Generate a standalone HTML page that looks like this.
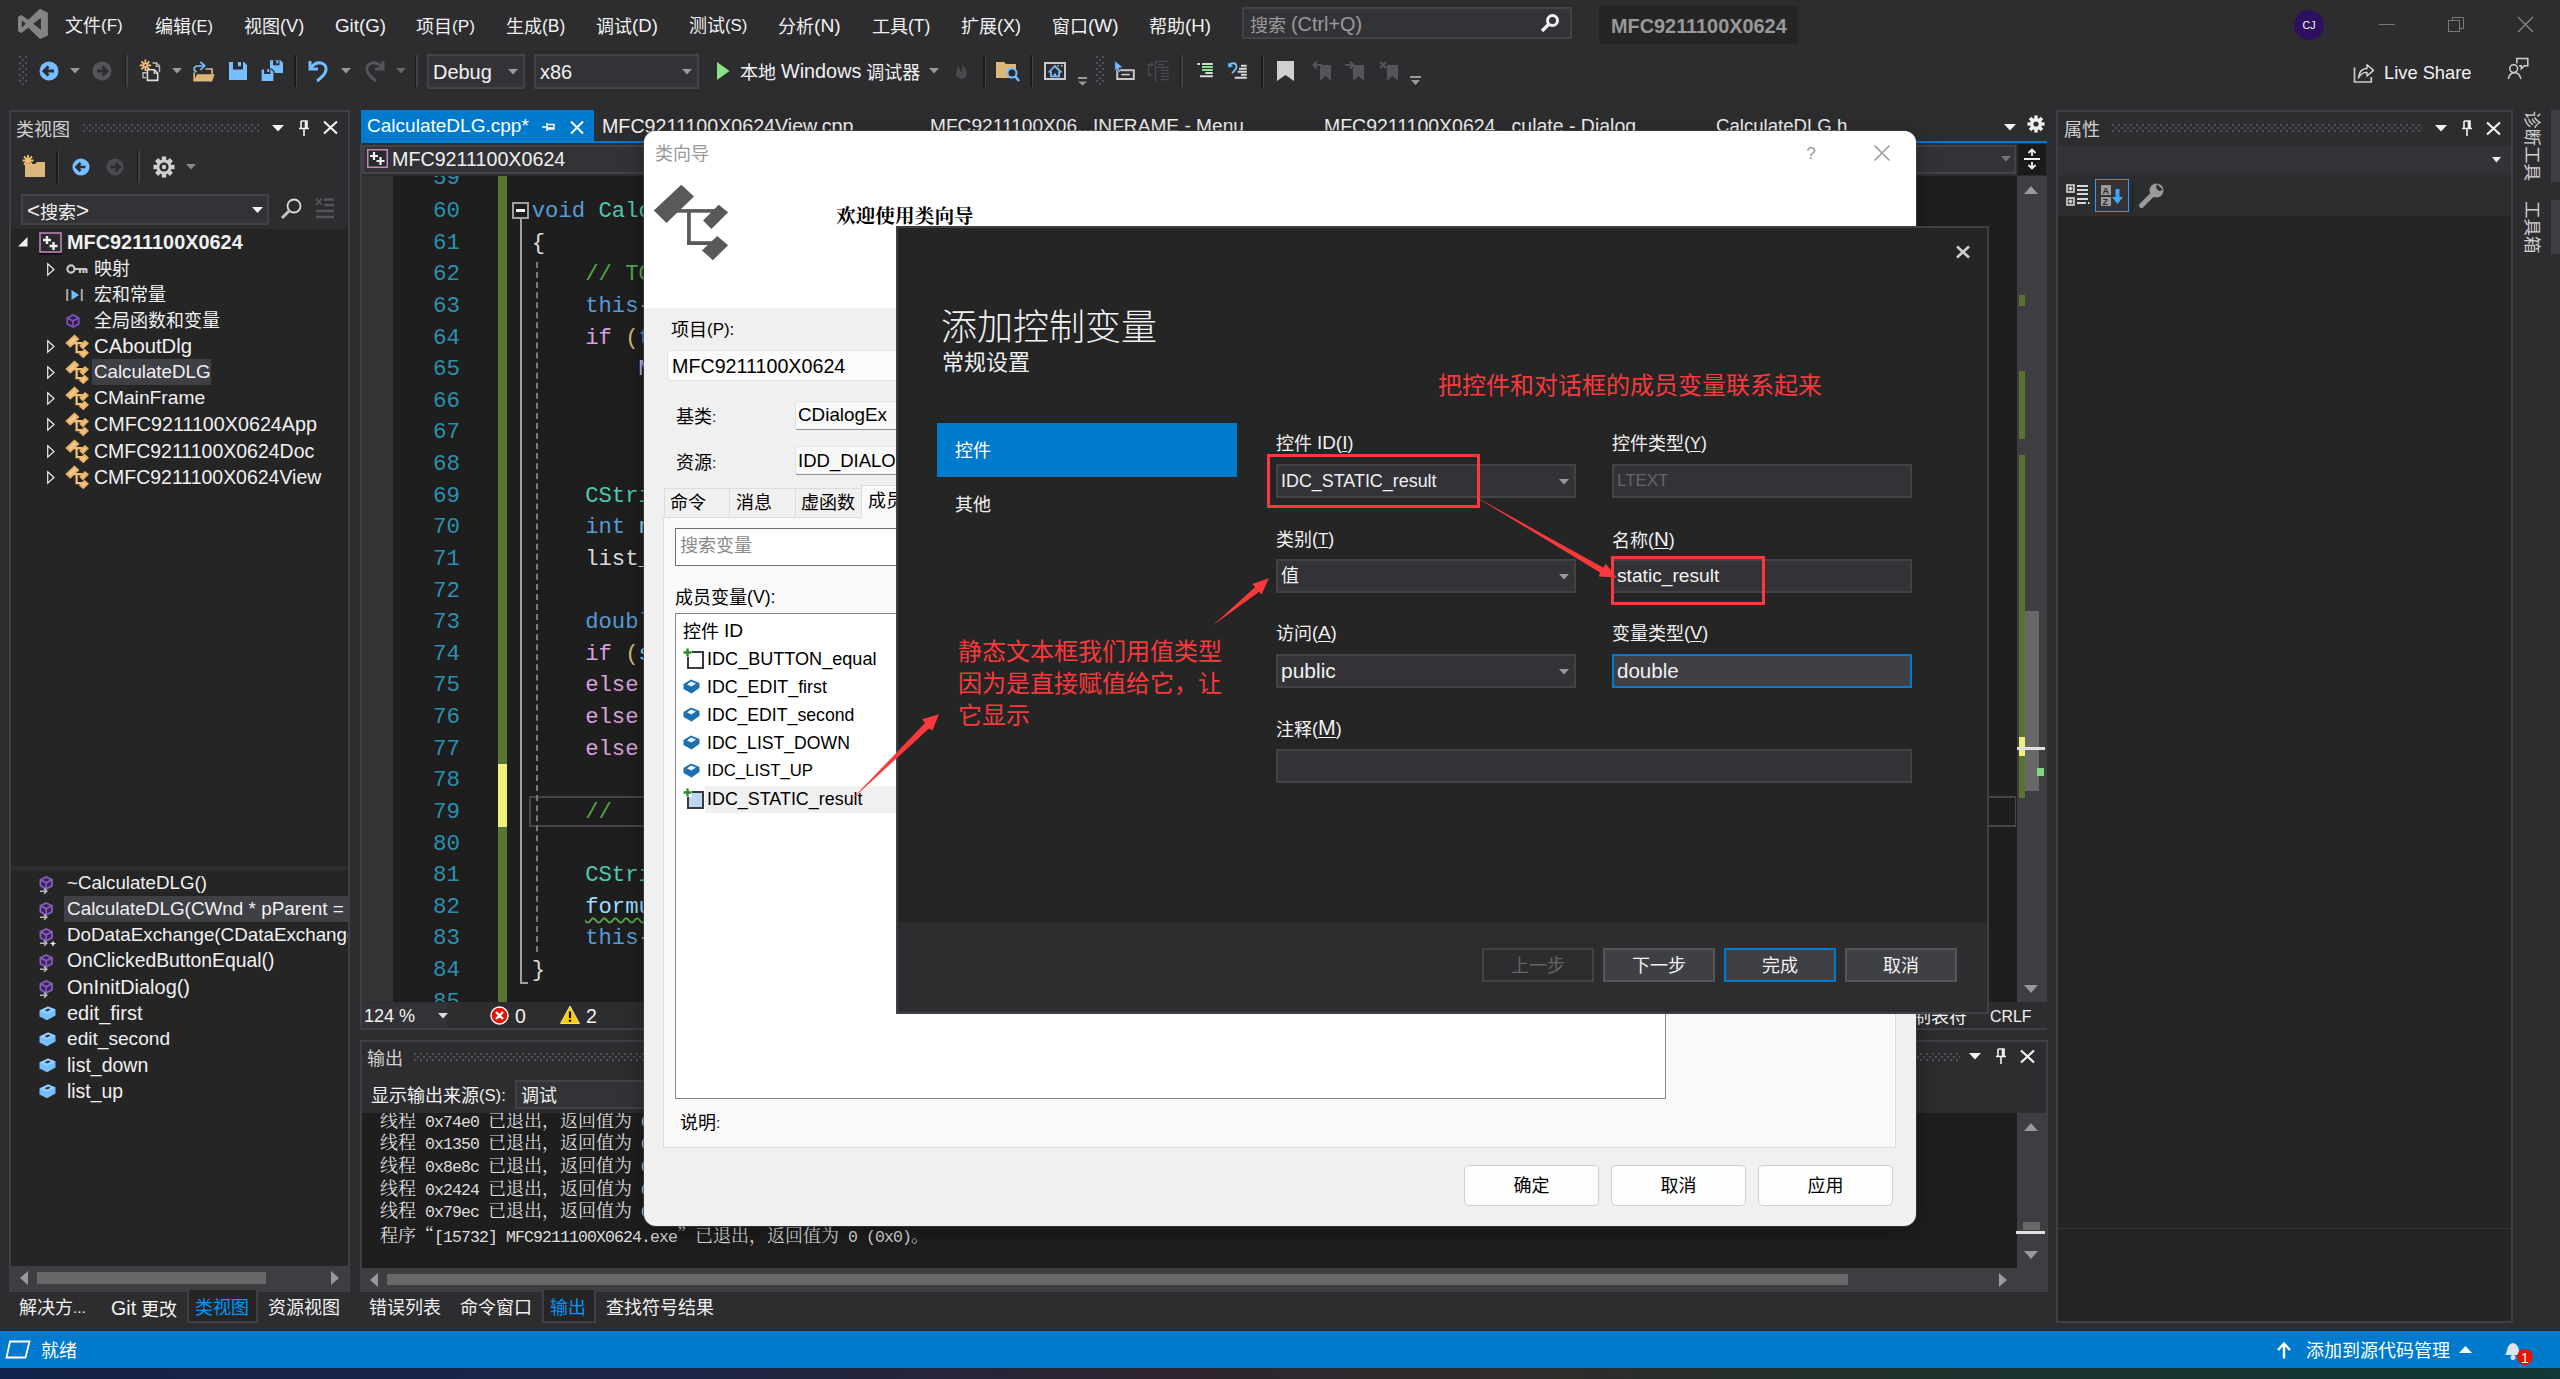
<!DOCTYPE html>
<html lang="zh-CN"><head><meta charset="utf-8"><title>MFC9211100X0624 - Microsoft Visual Studio</title>
<style>
*{box-sizing:border-box;margin:0;padding:0}
html,body{width:2560px;height:1379px;overflow:hidden;background:#2d2d30}
body{position:relative;font-family:"Liberation Sans","Noto Sans CJK SC",sans-serif;font-size:18px;color:#f1f1f1;line-height:1}
.a{position:absolute}
.t{position:absolute;white-space:nowrap;line-height:24px;height:24px;padding-top:1px}
.mono{font-family:"Liberation Mono","Noto Sans CJK SC",monospace}
.t.r{padding-top:0}
.b{font-weight:bold}
.e{font-size:1.08em;vertical-align:0.6px}

.cq{display:inline-block;width:18px;font-family:'Noto Serif CJK SC',serif}
.ol{font-family:'Liberation Mono',monospace;font-size:16.5px;letter-spacing:-0.9px}
svg{position:absolute;overflow:visible}
.grip{background-image:radial-gradient(circle at 1px 1px,#505056 0.75px,transparent 1.15px),radial-gradient(circle at 4px 4px,#505056 0.75px,transparent 1.15px);background-size:6px 6px}
.sep{position:absolute;width:3px;height:32px;background:linear-gradient(90deg,#1b1b1d 0,#1b1b1d 50%,#434347 50%,#434347 100%)}
.cb{position:absolute;background:#333337;border:2px solid #434346}
.code{position:absolute;white-space:pre;font-family:"Liberation Mono",monospace;font-size:22.25px;line-height:32px;height:32px;left:505px}
.ln{position:absolute;font-family:"Liberation Mono",monospace;font-size:22.5px;line-height:32px;height:32px;left:432px;color:#2b91af;white-space:pre}
.kw{color:#569cd6}.ck{color:#d8a0df}.ty{color:#4ec9b0}.cm{color:#57a64a}.va{color:#9cdcfe}.mc{color:#beb7ff}.pl{color:#dcdcdc}
.wl{position:absolute;white-space:nowrap;color:#000;line-height:24px;height:24px}
.dl{position:absolute;white-space:nowrap;color:#f1f1f1;line-height:24px;height:24px}
.dbox{position:absolute;background:#333337;border:2px solid #434346}
.dbtn{position:absolute;background:#3f3f46;border:2px solid #555555;text-align:center;line-height:32.5px;color:#f1f1f1;font-size:18px}
.wbtn{position:absolute;background:#fdfdfd;border:1px solid #d0d0d0;border-radius:5px;text-align:center;line-height:40px;color:#000;font-size:18px}
.red{color:#f9393c}
</style></head><body>
<!-- ===== title / menu bar ===== -->
<svg style="left:0;top:0" width="60" height="48" viewBox="0 0 60 48"><path d="M40 8.840 L47.900 12.700 V35.400 L40 39 L28.300 27.850 L21.300 33 L18 31.350 V16.700 L21.300 15 L28.300 19.850 Z M40.900 18 L33.200 23.850 L40.900 29.850 Z M21.800 20.200 V27.850 L25.700 23.850 Z" fill="#848486" fill-rule="evenodd"/></svg>
<div class="t" style="left:65px;top:13px">文件<span class="e" style="font-size:0.940em">(F)</span></div>
<div class="t" style="left:155px;top:13px">编辑<span class="e" style="font-size:0.915em">(E)</span></div>
<div class="t" style="left:244px;top:13px">视图<span class="e" style="font-size:1.010em">(V)</span></div>
<div class="t" style="left:335px;top:13px"><span class="e" style="font-size:1.041em">Git(G)</span></div>
<div class="t" style="left:416px;top:13px">项目<span class="e" style="font-size:0.960em">(P)</span></div>
<div class="t" style="left:506px;top:13px">生成<span class="e" style="font-size:0.971em">(B)</span></div>
<div class="t" style="left:596px;top:13px">调试<span class="e" style="font-size:1.034em">(D)</span></div>
<div class="t" style="left:689px;top:13px">测试<span class="e" style="font-size:0.936em">(S)</span></div>
<div class="t" style="left:778px;top:13px">分析<span class="e" style="font-size:1.071em">(N)</span></div>
<div class="t" style="left:872px;top:13px">工具<span class="e" style="font-size:0.971em">(T)</span></div>
<div class="t" style="left:961px;top:13px">扩展<span class="e" style="font-size:1.001em">(X)</span></div>
<div class="t" style="left:1052px;top:13px">窗口<span class="e" style="font-size:1.051em">(W)</span></div>
<div class="t" style="left:1149px;top:13px">帮助<span class="e" style="font-size:1.041em">(H)</span></div>
<div class="a" style="left:1242px;top:7px;width:330px;height:32px;background:#333337;border:2px solid #434346"></div>
<div class="t" style="left:1250px;top:11px;color:#999">搜索 <span class="e" style="font-size:1.102em">(Ctrl+Q)</span></div>
<svg style="left:1540px;top:13px" width="20" height="20" viewBox="0 0 20 20"><circle cx="12.5" cy="7.5" r="5" fill="none" stroke="#f1f1f1" stroke-width="3"/><path d="M8.5 11.5 L2 18" stroke="#f1f1f1" stroke-width="3.4"/></svg>
<div class="a" style="left:1599px;top:6px;width:199px;height:38px;background:#252526"></div>
<div class="t b" style="left:1611px;top:13px;color:#999"><span class="e" style="font-size:1.105em">MFC9211100X0624</span></div>
<div class="a" style="left:2294px;top:10px;width:30px;height:30px;border-radius:15px;background:#2e1060"></div>
<div class="t" style="left:2294px;top:12px;width:30px;text-align:center;font-size:12px;color:#fff"><span class="e" style="font-size:0.878em">CJ</span></div>
<div class="a" style="left:2379px;top:24px;width:16px;height:1px;background:#7a7a7a"></div>
<svg style="left:2448px;top:16px" width="17" height="17" viewBox="0 0 17 17"><rect x="0.5" y="4.5" width="11" height="11" fill="none" stroke="#7a7a7a"/><path d="M4.5 4.5 V1.5 H15.5 V12.5 H11.5" fill="none" stroke="#7a7a7a"/></svg>
<svg style="left:2517px;top:16px" width="17" height="17" viewBox="0 0 17 17"><path d="M1 1 L16 16 M16 1 L1 16" stroke="#8a8a8a" stroke-width="1.2"/></svg>

<!-- ===== toolbar ===== -->
<div class="a grip" style="left:19px;top:56px;width:8px;height:29px"></div>
<svg style="left:39px;top:61px" width="20" height="20" viewBox="0 0 20 20"><circle cx="10" cy="10" r="9.5" fill="#75beff"/><path d="M15 10 H6 M9.5 5.5 L5 10 L9.5 14.5" fill="none" stroke="#2d2d30" stroke-width="3"/></svg>
<svg style="left:70px;top:68px" width="10" height="6"><path d="M0 0 H10 L5 5.5 Z" fill="#999"/></svg>
<svg style="left:92px;top:61px" width="20" height="20" viewBox="0 0 20 20"><circle cx="10" cy="10" r="9.5" fill="#555559"/><path d="M5 10 H14 M10.5 5.5 L15 10 L10.5 14.5" fill="none" stroke="#2d2d30" stroke-width="3"/></svg>
<div class="sep" style="left:124.500px;top:55px"></div>
<!-- new item -->
<svg style="left:0;top:0" width="300" height="100" viewBox="0 0 300 100"><path d="M152.500 63 H156.500 L159.500 66 V72" fill="none" stroke="#bdbdbd" stroke-width="1.400"/><path d="M156.300 63 V66.300 H159.500" fill="none" stroke="#bdbdbd" stroke-width="1.200"/><path d="M146.600 72.800 H143 V77.600 H146" fill="none" stroke="#bdbdbd" stroke-width="1.400"/><path d="M147.400 69.700 H154.400 L157.700 73 V80.400 H147.400 Z" fill="#2d2d30" stroke="#dcdcdc" stroke-width="1.600"/><path d="M154.200 69.700 V73.200 H157.700" fill="none" stroke="#dcdcdc" stroke-width="1.300"/><path d="M145.400 59.600 V71 M139.700 65.300 H151.100 M141.400 61.300 L149.400 69.300 M149.400 61.300 L141.400 69.300" stroke="#f5c77e" stroke-width="1.700"/><circle cx="145.400" cy="65.300" r="1" fill="#2d2d30"/></svg>
<svg style="left:172px;top:68px" width="10" height="6"><path d="M0 0 H10 L5 5.5 Z" fill="#999"/></svg>
<!-- open -->
<svg style="left:0;top:0" width="300" height="100" viewBox="0 0 300 100"><path d="M194.200 81 V72.600 M205.400 69 H212 V74.500" fill="none" stroke="#dcb67a" stroke-width="1.700"/><path d="M197 74.200 H214.700 L212 81.400 H193.600 Z" fill="#dcb67a"/><path d="M196.600 72 C193 70.500 193.500 66.200 197.500 66 H204" fill="none" stroke="#75beff" stroke-width="1.700"/><path d="M200.400 62 L204.700 65.800 L200.400 69.900" fill="none" stroke="#75beff" stroke-width="1.700"/></svg>
<!-- save -->
<svg style="left:229px;top:62px" width="18" height="18" viewBox="0 0 18 18"><path d="M0 0 H15 L18 3 V18 H0 Z" fill="#75beff"/><rect x="4" y="0" width="10" height="7.500" fill="#2d2d30"/><rect x="9" y="0" width="3" height="4.300" fill="#75beff"/></svg>
<!-- save all -->
<svg style="left:261px;top:60px" width="23" height="22" viewBox="0 0 23 22"><path d="M9 0.300 H19.500 L22 2.800 V13 H9 Z" fill="#75beff"/><rect x="12" y="0.300" width="6.500" height="5" fill="#2d2d30"/><rect x="15.300" y="0.300" width="2" height="3" fill="#75beff"/><path d="M0 9 H10.500 L13 11.500 V21.500 H0 Z" fill="#75beff" stroke="#2d2d30" stroke-width="1.200"/><rect x="3" y="9" width="6.500" height="5" fill="#2d2d30"/><rect x="6.300" y="9" width="2" height="3" fill="#75beff"/></svg>
<div class="sep" style="left:293.500px;top:55px"></div>
<!-- undo -->
<svg style="left:308px;top:59px" width="22" height="24" viewBox="0 0 22 24"><path d="M2 2 V10 H10" fill="none" stroke="#75beff" stroke-width="3"/><path d="M3 9 C8 1 19 3 18 11 C17.5 15 13 19 9 22" fill="none" stroke="#75beff" stroke-width="3"/></svg>
<svg style="left:341px;top:68px" width="10" height="6"><path d="M0 0 H10 L5 5.5 Z" fill="#999"/></svg>
<svg style="left:363px;top:59px" width="22" height="24" viewBox="0 0 22 24"><path d="M20 2 V10 H12" fill="none" stroke="#555559" stroke-width="3"/><path d="M19 9 C14 1 3 3 4 11 C4.5 15 9 19 13 22" fill="none" stroke="#555559" stroke-width="3"/></svg>
<svg style="left:396px;top:68px" width="10" height="6"><path d="M0 0 H10 L5 5.5 Z" fill="#666"/></svg>
<div class="sep" style="left:415px;top:55px"></div>
<div class="cb" style="left:427px;top:54px;width:98px;height:35px"></div>
<div class="t" style="left:433px;top:59px"><span class="e" style="font-size:1.109em">Debug</span></div>
<svg style="left:508px;top:69px" width="10" height="6"><path d="M0 0 H10 L5 5.5 Z" fill="#999"/></svg>
<div class="cb" style="left:534px;top:54px;width:165px;height:35px"></div>
<div class="t" style="left:540px;top:59px"><span class="e" style="font-size:1.110em">x86</span></div>
<svg style="left:682px;top:69px" width="10" height="6"><path d="M0 0 H10 L5 5.5 Z" fill="#999"/></svg>
<svg style="left:716.500px;top:62px" width="13" height="18"><path d="M0 0 L12.500 9 L0 18 Z" fill="#8ae28a"/></svg>
<div class="t" style="left:740px;top:58px">本地 <span class="e" style="font-size:1.101em">Windows</span> 调试器</div>
<svg style="left:929px;top:68px" width="10" height="6"><path d="M0 0 H10 L5 5.5 Z" fill="#999"/></svg>
<svg style="left:954px;top:61px" width="16" height="20" viewBox="0 0 16 20"><path d="M7 1 C9 6 14 8 12 15 C11 18 6 19 3 16 C0 12 5 10 3 5 C6 7 7 9 7 12 C9 9 9 5 7 1 Z" fill="#4a4a4e"/></svg>
<div class="sep" style="left:982.500px;top:55px"></div>
<svg style="left:996px;top:60px" width="24" height="22" viewBox="0 0 24 22"><path d="M0 18 V2 H8 L10 4 H20 V18 Z" fill="#dcb67a"/><circle cx="16" cy="13" r="4.5" fill="#2d2d30" stroke="#75beff" stroke-width="2"/><path d="M19 16 L23 21" stroke="#75beff" stroke-width="2.5"/></svg>
<div class="sep" style="left:1030px;top:55px"></div>
<svg style="left:0;top:0" width="1300" height="100" viewBox="0 0 1300 100"><rect x="1045" y="63" width="20" height="16" fill="none" stroke="#c8c8c8" stroke-width="2"/><path d="M1048.700 72.500 L1054.800 66 L1061.400 72.500 M1051 71.500 V76.400 H1059.200 V71.500" fill="none" stroke="#75beff" stroke-width="1.800"/><rect x="1053.800" y="73.500" width="2.400" height="3" fill="#75beff"/><rect x="1057.500" y="65" width="1.500" height="1.500" fill="#c8c8c8"/><rect x="1061" y="65" width="1.500" height="1.500" fill="#c8c8c8"/><rect x="1078" y="77" width="9" height="2" fill="#999"/><path d="M1078 81.400 H1087 L1082.500 85.400 Z" fill="#999"/><rect x="1117.200" y="70.200" width="16.600" height="8.800" fill="none" stroke="#c8c8c8" stroke-width="2"/><path d="M1121.400 74.600 H1129.800" stroke="#c8c8c8" stroke-width="1.600"/><path d="M1114.800 60.800 L1122.800 67.300 L1118.600 68.300 L1120.700 71.600 L1118.900 72.500 L1116.700 69.200 L1114.800 71.100 Z" fill="#75beff" stroke="#2d2d30" stroke-width="0.600"/><g stroke="#4a4a4e" stroke-width="1.300" fill="none"><path d="M1155.600 60.800 V81.400 M1155.600 61.300 H1168.700 M1158 64.500 H1164 M1155.600 67.300 H1168.700 M1160.800 70.300 H1168.700 M1160.800 73.400 H1168.700 M1160.800 76.400 H1168.700 M1160.800 79.500 H1168.700"/><path d="M1152.800 64.500 H1148.500 V75 H1152 M1151 62.800 L1153 64.500 L1151 66.200"/></g><g stroke-width="2"><path d="M1197.300 64 H1200 M1202 64 H1212.800 M1205.300 73 H1212.800 M1200 76.300 H1212.800" stroke="#d8d8d8"/><path d="M1202 67 H1212.800 M1202 69.900 H1212.800" stroke="#8ae28a"/></g><g stroke-width="2"><path d="M1241 65.750 H1246.750 M1239 68.750 H1246.750 M1237.700 71.750 H1246.750 M1241 74.800 H1246.750 M1234.800 77.800 H1246.750" stroke="#d8d8d8"/><path d="M1229 66 C1231 62 1236.500 62.500 1236.500 66.500 C1236.500 69.500 1234 71 1232 73" stroke="#75beff" fill="none" stroke-width="1.800"/><path d="M1228 62.800 L1228.600 67.500 L1233 66.400 Z" fill="#75beff"/></g></svg>
<div class="a grip" style="left:1096px;top:56px;width:8px;height:29px"></div>
<div class="sep" style="left:1180px;top:55px"></div>
<div class="sep" style="left:1261px;top:55px"></div>
<svg style="left:1277px;top:61px" width="17" height="20"><path d="M0 0 H17 V20 L8.5 14 L0 20 Z" fill="#d0d0d0"/></svg>
<svg style="left:1312px;top:61px" width="19" height="20" viewBox="0 0 19 20"><path d="M8 4 H19 V20 L13.5 15 L8 20 Z" fill="#555559"/><path d="M10 4 H2 M5 0.5 L1.5 4 L5 7.5" fill="none" stroke="#555559" stroke-width="2"/></svg>
<svg style="left:1345px;top:61px" width="19" height="20" viewBox="0 0 19 20"><path d="M8 4 H19 V20 L13.5 15 L8 20 Z" fill="#555559"/><path d="M0 4 H8 M5 0.5 L8.5 4 L5 7.5" fill="none" stroke="#555559" stroke-width="2"/></svg>
<svg style="left:1379px;top:61px" width="19" height="20" viewBox="0 0 19 20"><path d="M8 4 H19 V20 L13.5 15 L8 20 Z" fill="#555559"/><path d="M1 1 L7 7 M7 1 L1 7" fill="none" stroke="#555559" stroke-width="2"/></svg>
<svg style="left:1410px;top:76px" width="11" height="9"><path d="M0 0 H11 V2 H0 Z M1 4 H10 L5.5 9 Z" fill="#999"/></svg>
<!-- live share -->
<svg style="left:2340px;top:50px" width="50" height="40" viewBox="2340 50 50 40"><path d="M2354.500 67.400 V82 H2371.300 V77" fill="none" stroke="#c8c8c8" stroke-width="1.700"/><path d="M2358.500 78 C2359 72 2362 68.500 2367 68.500 V64.800 L2373.500 70.400 L2367 76 V72.400 C2363 72.400 2360.500 74 2358.500 78 Z" fill="none" stroke="#d8d8d8" stroke-width="1.400" stroke-linejoin="round"/></svg>
<div class="t" style="left:2384px;top:60px"><span class="e" style="font-size:1.017em">Live Share</span></div>
<svg style="left:2500px;top:50px" width="40" height="40" viewBox="2500 50 40 40"><circle cx="2513.700" cy="68.600" r="3.900" fill="none" stroke="#d0d0d0" stroke-width="1.500"/><path d="M2508.400 79 C2509.500 70.500 2519.500 70.500 2520.800 79" fill="none" stroke="#d0d0d0" stroke-width="1.500"/><path d="M2516.800 63.500 V58.400 H2527.800 V65.800 H2524.300 L2521.300 68.800 V65.800 H2519.200" fill="none" stroke="#d0d0d0" stroke-width="1.500"/></svg>
<!-- ===== left tool window: class view ===== -->
<div class="a" style="left:9px;top:110px;width:341px;height:1182px;background:#2d2d30;border:2px solid #3f3f46"></div>
<div class="t" style="left:16px;top:117px;color:#d0d0d0">类视图</div>
<div class="a grip" style="left:83px;top:124px;width:176px;height:8px"></div>
<svg style="left:272px;top:125px" width="12" height="7"><path d="M0 0 H12 L6 6.5 Z" fill="#f1f1f1"/></svg>
<svg style="left:298px;top:120px" width="12" height="17" viewBox="0 0 12 17"><path d="M3 1 H9 V8 M3 1 V8 M1 8.500 H11 M6 9 V16 M7.500 1 V8" fill="none" stroke="#f1f1f1" stroke-width="1.6"/></svg>
<svg style="left:323px;top:121px" width="15" height="13" viewBox="0 0 15 13"><path d="M1 0.5 L14 12.500 M14 0.5 L1 12.500" stroke="#f1f1f1" stroke-width="2.2"/></svg>
<!-- toolbar -->
<svg style="left:22px;top:155px" width="24" height="23" viewBox="0 0 24 23"><path d="M3 22 V9 H13 L15 7 H23 V22 Z" fill="#dcb67a"/><path d="M6 0 V11 M0.5 5.500 H11.500 M2 1.500 L10 9.500 M10 1.500 L2 9.500" stroke="#f0c070" stroke-width="1.8"/></svg>
<div class="sep" style="left:56px;top:151px"></div>
<svg style="left:72px;top:158px" width="18" height="18" viewBox="0 0 20 20"><circle cx="10" cy="10" r="9.5" fill="#75beff"/><path d="M15 10 H6 M9.5 5.5 L5 10 L9.5 14.5" fill="none" stroke="#2d2d30" stroke-width="3"/></svg>
<svg style="left:106px;top:158px" width="18" height="18" viewBox="0 0 20 20"><circle cx="10" cy="10" r="9.5" fill="#4a4a4e"/><path d="M5 10 H14 M10.5 5.5 L15 10 L10.5 14.5" fill="none" stroke="#2d2d30" stroke-width="3"/></svg>
<div class="sep" style="left:137px;top:151px"></div>
<svg style="left:153px;top:156px" width="22" height="22" viewBox="-11 -11 22 22"><g fill="#d0d0d0"><circle r="7.5"/><rect x="-2.200" y="-10.500" width="4.400" height="5" transform="rotate(0)"/><rect x="-2.200" y="-10.500" width="4.400" height="5" transform="rotate(45)"/><rect x="-2.200" y="-10.500" width="4.400" height="5" transform="rotate(90)"/><rect x="-2.200" y="-10.500" width="4.400" height="5" transform="rotate(135)"/><rect x="-2.200" y="-10.500" width="4.400" height="5" transform="rotate(180)"/><rect x="-2.200" y="-10.500" width="4.400" height="5" transform="rotate(225)"/><rect x="-2.200" y="-10.500" width="4.400" height="5" transform="rotate(270)"/><rect x="-2.200" y="-10.500" width="4.400" height="5" transform="rotate(315)"/></g><circle r="4.600" fill="#2d2d30"/><circle r="2.200" fill="#d0d0d0"/></svg>
<svg style="left:186px;top:164px" width="10" height="6"><path d="M0 0 H10 L5 5.5 Z" fill="#888"/></svg>
<!-- search -->
<div class="cb" style="left:21px;top:194px;width:248px;height:31px"></div>
<div class="t r" style="left:27px;top:199px"><span class="e" style="font-size:1.242em">&lt;</span>搜索<span class="e" style="font-size:1.242em">&gt;</span></div>
<svg style="left:252px;top:207px" width="11" height="6"><path d="M0 0 H11 L5.5 6 Z" fill="#f1f1f1"/></svg>
<svg style="left:281px;top:198px" width="21" height="21" viewBox="0 0 21 21"><circle cx="13" cy="8" r="6.500" fill="none" stroke="#dcdcdc" stroke-width="1.8"/><path d="M8.500 12.500 L1 20" stroke="#c0c0c0" stroke-width="3"/></svg>
<svg style="left:315px;top:198px" width="20" height="21" viewBox="0 0 20 21"><path d="M9 1.500 H19 M9 7 H19 M1 13 H19 M1 19 H19" stroke="#555559" stroke-width="2.600"/><path d="M1 0.5 L7 7 M7 0.5 L1 7" stroke="#555559" stroke-width="1.800"/></svg>
<!-- tree -->
<div class="a" style="left:11px;top:229px;width:337px;height:637px;background:#252526"></div>
<svg style="left:18px;top:237px" width="10" height="10"><path d="M9.500 0 V9.500 H0 Z" fill="#f1f1f1"/></svg>
<svg style="left:39px;top:232px" width="23" height="23" viewBox="0 0 23 23"><rect x="1" y="1" width="21" height="19" fill="#2a2a2c" stroke="#c586c0" stroke-width="1.500"/><path d="M8 4 V12 M4 8 H12 M14.500 10 V18 M10.500 14 H18.500" stroke="#f1f1f1" stroke-width="2.400"/><path d="M0 22 H23" stroke="#111" stroke-width="2"/></svg>
<div class="t b r" style="left:67px;top:230px"><span class="e" style="font-size:1.105em">MFC9211100X0624</span></div>
<svg style="left:46.500px;top:263px" width="8" height="13"><path d="M0.700 0.800 L7 6.500 L0.700 12.200 Z" fill="none" stroke="#ececec" stroke-width="1.200"/></svg>
<svg style="left:66px;top:264px" width="22" height="12" viewBox="0 0 22 12"><circle cx="5" cy="5" r="3.600" fill="none" stroke="#c8c8c8" stroke-width="2.200"/><path d="M9 5 H21 M14 5 V9 M17.500 5 V9 M20.500 5 V9" stroke="#c8c8c8" stroke-width="2.200" fill="none"/></svg>
<div class="t r" style="left:94px;top:257px">映射</div>
<svg style="left:66px;top:289px" width="18" height="12" viewBox="0 0 18 12"><path d="M1.200 0 V12 M15.800 0 V12" stroke="#a8a8a8" stroke-width="2"/><path d="M5.500 1 L13 6 L5.500 11 Z" fill="#75beff"/></svg>
<div class="t r" style="left:94px;top:283px">宏和常量</div>
<svg style="left:66px;top:313.500px" width="14" height="14" viewBox="0 0 16 16"><path d="M8 1 L14.500 4.500 V11.500 L8 15 L1.500 11.500 V4.500 Z" fill="#2f1d48" stroke="#7f52b8" stroke-width="2"/><path d="M1.500 4.500 L8 8 L14.500 4.500 M8 8 V15" fill="none" stroke="#7f52b8" stroke-width="1.800"/></svg>
<div class="t r" style="left:94px;top:309px">全局函数和变量</div>
<svg style="left:46.500px;top:340px" width="8" height="13"><path d="M0.700 0.800 L7 6.500 L0.700 12.200 Z" fill="none" stroke="#ececec" stroke-width="1.200"/></svg>
<svg style="left:64.400px;top:332.8px" width="28" height="28" viewBox="0 0 100 100"><g fill="#f5ca8a" stroke="#e9b266" stroke-width="7" stroke-linejoin="miter"><path d="M37.300 9.800 L50 21.400 L22.500 47.900 L9.800 35.500 Z"/><path d="M74.700 29.700 L84.100 37.300 L67.400 54 L59.100 45.500 Z"/><path d="M73.200 60.900 L84.100 70.300 L68.900 85.200 L58 75.400 Z"/></g><path d="M33 36 H66 M45 37 V68.200 H66" fill="none" stroke="#f0c07a" stroke-width="8"/></svg>
<div class="t r" style="left:94px;top:334px"><span class="e" style="font-size:1.127em">CAboutDlg</span></div>
<div class="a" style="left:92px;top:359px;width:119px;height:26px;background:#3f3f46"></div>
<svg style="left:46.500px;top:366px" width="8" height="13"><path d="M0.700 0.800 L7 6.500 L0.700 12.200 Z" fill="none" stroke="#ececec" stroke-width="1.200"/></svg>
<svg style="left:64.400px;top:358.8px" width="28" height="28" viewBox="0 0 100 100"><g fill="#f5ca8a" stroke="#e9b266" stroke-width="7" stroke-linejoin="miter"><path d="M37.300 9.800 L50 21.400 L22.500 47.900 L9.800 35.500 Z"/><path d="M74.700 29.700 L84.100 37.300 L67.400 54 L59.100 45.500 Z"/><path d="M73.200 60.900 L84.100 70.300 L68.900 85.200 L58 75.400 Z"/></g><path d="M33 36 H66 M45 37 V68.200 H66" fill="none" stroke="#f0c07a" stroke-width="8"/></svg>
<div class="t r" style="left:94px;top:360px"><span class="e" style="font-size:1.040em">CalculateDLG</span></div>
<svg style="left:46.500px;top:392px" width="8" height="13"><path d="M0.700 0.800 L7 6.500 L0.700 12.200 Z" fill="none" stroke="#ececec" stroke-width="1.200"/></svg>
<svg style="left:64.400px;top:384.8px" width="28" height="28" viewBox="0 0 100 100"><g fill="#f5ca8a" stroke="#e9b266" stroke-width="7" stroke-linejoin="miter"><path d="M37.300 9.800 L50 21.400 L22.500 47.900 L9.800 35.500 Z"/><path d="M74.700 29.700 L84.100 37.300 L67.400 54 L59.100 45.500 Z"/><path d="M73.200 60.900 L84.100 70.300 L68.900 85.200 L58 75.400 Z"/></g><path d="M33 36 H66 M45 37 V68.200 H66" fill="none" stroke="#f0c07a" stroke-width="8"/></svg>
<div class="t r" style="left:94px;top:386px"><span class="e" style="font-size:1.069em">CMainFrame</span></div>
<svg style="left:46.500px;top:418px" width="8" height="13"><path d="M0.700 0.800 L7 6.500 L0.700 12.200 Z" fill="none" stroke="#ececec" stroke-width="1.200"/></svg>
<svg style="left:64.400px;top:410.8px" width="28" height="28" viewBox="0 0 100 100"><g fill="#f5ca8a" stroke="#e9b266" stroke-width="7" stroke-linejoin="miter"><path d="M37.300 9.800 L50 21.400 L22.500 47.900 L9.800 35.500 Z"/><path d="M74.700 29.700 L84.100 37.300 L67.400 54 L59.100 45.500 Z"/><path d="M73.200 60.900 L84.100 70.300 L68.900 85.200 L58 75.400 Z"/></g><path d="M33 36 H66 M45 37 V68.200 H66" fill="none" stroke="#f0c07a" stroke-width="8"/></svg>
<div class="t r" style="left:94px;top:412px"><span class="e" style="font-size:1.096em">CMFC9211100X0624App</span></div>
<svg style="left:46.500px;top:445px" width="8" height="13"><path d="M0.700 0.800 L7 6.500 L0.700 12.200 Z" fill="none" stroke="#ececec" stroke-width="1.200"/></svg>
<svg style="left:64.400px;top:437.8px" width="28" height="28" viewBox="0 0 100 100"><g fill="#f5ca8a" stroke="#e9b266" stroke-width="7" stroke-linejoin="miter"><path d="M37.300 9.800 L50 21.400 L22.500 47.900 L9.800 35.500 Z"/><path d="M74.700 29.700 L84.100 37.300 L67.400 54 L59.100 45.500 Z"/><path d="M73.200 60.900 L84.100 70.300 L68.900 85.200 L58 75.400 Z"/></g><path d="M33 36 H66 M45 37 V68.200 H66" fill="none" stroke="#f0c07a" stroke-width="8"/></svg>
<div class="t r" style="left:94px;top:439px"><span class="e" style="font-size:1.083em">CMFC9211100X0624Doc</span></div>
<svg style="left:46.500px;top:471px" width="8" height="13"><path d="M0.700 0.800 L7 6.500 L0.700 12.200 Z" fill="none" stroke="#ececec" stroke-width="1.200"/></svg>
<svg style="left:64.400px;top:463.8px" width="28" height="28" viewBox="0 0 100 100"><g fill="#f5ca8a" stroke="#e9b266" stroke-width="7" stroke-linejoin="miter"><path d="M37.300 9.800 L50 21.400 L22.500 47.900 L9.800 35.500 Z"/><path d="M74.700 29.700 L84.100 37.300 L67.400 54 L59.100 45.500 Z"/><path d="M73.200 60.900 L84.100 70.300 L68.900 85.200 L58 75.400 Z"/></g><path d="M33 36 H66 M45 37 V68.200 H66" fill="none" stroke="#f0c07a" stroke-width="8"/></svg>
<div class="t r" style="left:94px;top:465px"><span class="e" style="font-size:1.082em">CMFC9211100X0624View</span></div>
<div class="a" style="left:11px;top:866px;width:337px;height:5px;background:#2d2d30"></div>
<div class="a" style="left:11px;top:871px;width:337px;height:395px;background:#252526"></div>
<svg style="left:38px;top:876px" width="20" height="20" viewBox="0 0 20 20"><path d="M8.200 1 L14 3.800 V9.800 L8.200 13 L2.400 9.800 V3.800 Z" fill="#3a2458" stroke="#8a5fc0" stroke-width="1.700"/><path d="M2.400 3.800 L8.200 6.800 L14 3.800 M8.200 6.800 V13" fill="none" stroke="#8a5fc0" stroke-width="1.600"/><path d="M2 15.200 H8.500 M6 12.600 L8.800 15.200 L6 17.800" fill="none" stroke="#b8b8b8" stroke-width="1.500"/></svg>
<div class="t r" style="left:67px;top:871px;"><span class="e" style="font-size:1.041em">~CalculateDLG()</span></div>
<div class="a" style="left:64px;top:896px;width:284px;height:26px;background:#3f3f46"></div>
<svg style="left:38px;top:902px" width="20" height="20" viewBox="0 0 20 20"><path d="M8.200 1 L14 3.800 V9.800 L8.200 13 L2.400 9.800 V3.800 Z" fill="#3a2458" stroke="#8a5fc0" stroke-width="1.700"/><path d="M2.400 3.800 L8.200 6.800 L14 3.800 M8.200 6.800 V13" fill="none" stroke="#8a5fc0" stroke-width="1.600"/><path d="M2 15.200 H8.500 M6 12.600 L8.800 15.200 L6 17.800" fill="none" stroke="#b8b8b8" stroke-width="1.500"/></svg>
<div class="t r" style="left:67px;top:897px;width:281px;overflow:hidden;"><span class="e" style="font-size:1.050em">CalculateDLG(CWnd * pParent =</span></div>
<svg style="left:38px;top:928px" width="20" height="20" viewBox="0 0 20 20"><path d="M8.200 1 L14 3.800 V9.800 L8.200 13 L2.400 9.800 V3.800 Z" fill="#3a2458" stroke="#8a5fc0" stroke-width="1.700"/><path d="M2.400 3.800 L8.200 6.800 L14 3.800 M8.200 6.800 V13" fill="none" stroke="#8a5fc0" stroke-width="1.600"/><path d="M2 15.200 H8.500 M6 12.600 L8.800 15.200 L6 17.800" fill="none" stroke="#b8b8b8" stroke-width="1.500"/><path d="M15 12.500 L15.900 14.800 L18.200 15.500 L15.900 16.400 L15 18.700 L14.100 16.400 L11.800 15.500 L14.100 14.800 Z" fill="#f1f1f1"/></svg>
<div class="t r" style="left:67px;top:923px;width:281px;overflow:hidden;"><span class="e" style="font-size:1.045em">DoDataExchange(CDataExchange</span></div>
<svg style="left:38px;top:954px" width="20" height="20" viewBox="0 0 20 20"><path d="M8.200 1 L14 3.800 V9.800 L8.200 13 L2.400 9.800 V3.800 Z" fill="#3a2458" stroke="#8a5fc0" stroke-width="1.700"/><path d="M2.400 3.800 L8.200 6.800 L14 3.800 M8.200 6.800 V13" fill="none" stroke="#8a5fc0" stroke-width="1.600"/><path d="M2 15.200 H8.500 M6 12.600 L8.800 15.200 L6 17.800" fill="none" stroke="#b8b8b8" stroke-width="1.500"/></svg>
<div class="t r" style="left:67px;top:949px;"><span class="e" style="font-size:1.074em">OnClickedButtonEqual()</span></div>
<svg style="left:38px;top:980px" width="20" height="20" viewBox="0 0 20 20"><path d="M8.200 1 L14 3.800 V9.800 L8.200 13 L2.400 9.800 V3.800 Z" fill="#3a2458" stroke="#8a5fc0" stroke-width="1.700"/><path d="M2.400 3.800 L8.200 6.800 L14 3.800 M8.200 6.800 V13" fill="none" stroke="#8a5fc0" stroke-width="1.600"/><path d="M2 15.200 H8.500 M6 12.600 L8.800 15.200 L6 17.800" fill="none" stroke="#b8b8b8" stroke-width="1.500"/></svg>
<div class="t r" style="left:67px;top:975px;"><span class="e" style="font-size:1.108em">OnInitDialog()</span></div>
<svg style="left:39px;top:1006px" width="18" height="15" viewBox="0 0 18 15"><path d="M0.500 4.500 L9 0.500 L16.500 3.500 V9.500 L8 14.200 L0.500 10.500 Z" fill="#75beff"/><path d="M0.500 4.500 L9 0.500 L16.500 3.500 L8 7.800 Z" fill="#9ad0ff"/><path d="M5.500 4.300 L9.300 2.600 L11.800 3.700 L8 5.500 Z" fill="#1f3a57"/></svg>
<div class="t r" style="left:67px;top:1001px;"><span class="e" style="font-size:1.110em">edit_first</span></div>
<svg style="left:39px;top:1032px" width="18" height="15" viewBox="0 0 18 15"><path d="M0.500 4.500 L9 0.500 L16.500 3.500 V9.500 L8 14.200 L0.500 10.500 Z" fill="#75beff"/><path d="M0.500 4.500 L9 0.500 L16.500 3.500 L8 7.800 Z" fill="#9ad0ff"/><path d="M5.500 4.300 L9.300 2.600 L11.800 3.700 L8 5.500 Z" fill="#1f3a57"/></svg>
<div class="t r" style="left:67px;top:1027px;"><span class="e" style="font-size:1.062em">edit_second</span></div>
<svg style="left:39px;top:1058px" width="18" height="15" viewBox="0 0 18 15"><path d="M0.500 4.500 L9 0.500 L16.500 3.500 V9.500 L8 14.200 L0.500 10.500 Z" fill="#75beff"/><path d="M0.500 4.500 L9 0.500 L16.500 3.500 L8 7.800 Z" fill="#9ad0ff"/><path d="M5.500 4.300 L9.300 2.600 L11.800 3.700 L8 5.500 Z" fill="#1f3a57"/></svg>
<div class="t r" style="left:67px;top:1053px;"><span class="e" style="font-size:1.083em">list_down</span></div>
<svg style="left:39px;top:1084px" width="18" height="15" viewBox="0 0 18 15"><path d="M0.500 4.500 L9 0.500 L16.500 3.500 V9.500 L8 14.200 L0.500 10.500 Z" fill="#75beff"/><path d="M0.500 4.500 L9 0.500 L16.500 3.500 L8 7.800 Z" fill="#9ad0ff"/><path d="M5.500 4.300 L9.300 2.600 L11.800 3.700 L8 5.500 Z" fill="#1f3a57"/></svg>
<div class="t r" style="left:67px;top:1079px;"><span class="e" style="font-size:1.078em">list_up</span></div>
<div class="a" style="left:11px;top:1266px;width:337px;height:25px;background:#3e3e42"></div>
<svg style="left:20px;top:1271px" width="8" height="14"><path d="M8 0 V14 L0 7 Z" fill="#999"/></svg>
<div class="a" style="left:37px;top:1272px;width:229px;height:12px;background:#686868"></div>
<svg style="left:331px;top:1271px" width="8" height="14"><path d="M0 0 V14 L8 7 Z" fill="#999"/></svg>
<div class="t" style="left:19px;top:1295px">解决方<span class="e" style="font-size:0.858em">...</span></div>
<div class="t" style="left:111px;top:1295px"><span class="e" style="font-size:1.091em">Git</span> 更改</div>
<div class="a" style="left:187px;top:1290px;width:71px;height:33px;background:#252526;border:2px solid #3f3f46;border-top:none"></div>
<div class="t" style="left:195px;top:1295px;color:#0097fb">类视图</div>
<div class="t" style="left:268px;top:1295px">资源视图</div>
<!-- ===== editor ===== -->
<div class="a" style="left:361px;top:110px;width:233px;height:33px;background:#007acc"></div>
<div class="a" style="left:361px;top:141px;width:1686px;height:2px;background:#007acc"></div>
<div class="t" style="left:367px;top:113px;color:#fff"><span class="e" style="font-size:1.058em">CalculateDLG.cpp*</span></div>
<svg style="left:542px;top:121px" width="14" height="12" viewBox="0 0 14 12"><path d="M0 6 H5 M5 2 V10 M5 3.500 H12 V8 H5 M5 7 H12" fill="none" stroke="#fff" stroke-width="1.500"/></svg>
<svg style="left:570px;top:121px" width="14" height="13" viewBox="0 0 14 13"><path d="M1 0.5 L13 12.500 M13 0.5 L1 12.500" stroke="#fff" stroke-width="2"/></svg>
<div class="t" style="left:602px;top:113px"><span class="e" style="font-size:1.093em">MFC9211100X0624View.cpp</span></div>
<div class="t" style="left:930px;top:113px"><span class="e" style="font-size:1.063em">MFC9211100X06...INFRAME - Menu</span></div>
<div class="t" style="left:1324px;top:113px"><span class="e" style="font-size:1.082em">MFC9211100X0624...culate - Dialog</span></div>
<div class="t" style="left:1716px;top:113px"><span class="e" style="font-size:1.035em">CalculateDLG.h</span></div>
<svg style="left:2004px;top:124px" width="12" height="7"><path d="M0 0 H12 L6 6.500 Z" fill="#f1f1f1"/></svg>
<svg style="left:2027px;top:115px" width="18" height="18" viewBox="-9 -9 18 18"><g fill="#f1f1f1"><circle r="6"/><rect x="-1.700" y="-8.500" width="3.400" height="4" transform="rotate(0)"/><rect x="-1.700" y="-8.500" width="3.400" height="4" transform="rotate(45)"/><rect x="-1.700" y="-8.500" width="3.400" height="4" transform="rotate(90)"/><rect x="-1.700" y="-8.500" width="3.400" height="4" transform="rotate(135)"/><rect x="-1.700" y="-8.500" width="3.400" height="4" transform="rotate(180)"/><rect x="-1.700" y="-8.500" width="3.400" height="4" transform="rotate(225)"/><rect x="-1.700" y="-8.500" width="3.400" height="4" transform="rotate(270)"/><rect x="-1.700" y="-8.500" width="3.400" height="4" transform="rotate(315)"/></g><circle r="2.600" fill="#2d2d30"/></svg>
<div class="a" style="left:360px;top:143px;width:1687px;height:33px;background:#2d2d30;border-left:2px solid #3f3f46"></div>
<div class="a" style="left:362px;top:145px;width:1654px;height:29px;background:#333337;border:2px solid #434346"></div>
<svg style="left:367px;top:149px" width="21" height="19" viewBox="0 0 21 19"><rect x="0.75" y="0.75" width="19.500" height="17.500" fill="#2a2a2c" stroke="#c586c0" stroke-width="1.500"/><path d="M7 3 V11 M3 7 H11 M13.500 8 V16 M9.500 12 H17.500" stroke="#f1f1f1" stroke-width="2.200"/></svg>
<div class="t r" style="left:392px;top:147px"><span class="e" style="font-size:1.095em">MFC9211100X0624</span></div>
<svg style="left:2001px;top:156px" width="10" height="6"><path d="M0 0 H10 L5 5.500 Z" fill="#777"/></svg>
<div class="a" style="left:2018px;top:144px;width:28px;height:31px;background:#1b1b1c"></div>
<svg style="left:2024px;top:149px" width="16" height="20" viewBox="0 0 16 20"><path d="M0 10 H16 M8 1 V7 M8 13 V19 M4.500 4 L8 0.5 L11.500 4 M4.500 16 L8 19.500 L11.500 16" fill="none" stroke="#f1f1f1" stroke-width="1.800"/></svg>
<div class="a" style="left:360px;top:176px;width:1687px;height:826px;background:#1e1e1e;border-left:2px solid #3f3f46;overflow:hidden"></div>
<div class="a" style="left:362px;top:176px;width:31px;height:826px;background:#333333"></div>
<div class="a" style="left:498px;top:176px;width:9px;height:826px;background:#577430"></div>
<div class="a" style="left:498px;top:764px;width:9px;height:63px;background:#efef7c"></div>
<div class="a" style="left:362px;top:176px;width:1654px;height:826px;overflow:hidden">
<div class="ln" style="left:71px;top:-14.1px">59</div>
<div class="ln" style="left:71px;top:19.0px">60</div>
<div class="code" style="left:143px;top:19.0px">  <span class="kw">void</span> <span class="ty">CalculateDLG</span><span class="pl">::</span><span style="color:#dcdcaa">OnClickedButtonEqual</span><span class="pl">()</span></div>
<div class="ln" style="left:71px;top:50.6px">61</div>
<div class="code" style="left:143px;top:50.6px">  <span class="pl">{</span></div>
<div class="ln" style="left:71px;top:82.3px">62</div>
<div class="code" style="left:143px;top:82.3px">      <span class="cm">// TODO: 在此添加控件通知处理程序代码</span></div>
<div class="ln" style="left:71px;top:113.9px">63</div>
<div class="code" style="left:143px;top:113.9px">      <span class="kw">this</span><span class="pl">-&gt;UpdateData(</span><span class="kw">true</span><span class="pl">);</span></div>
<div class="ln" style="left:71px;top:145.5px">64</div>
<div class="code" style="left:143px;top:145.5px">      <span class="ck">if</span> <span style="color:#d7ba7d">(</span><span class="kw">this</span><span class="pl">-&gt;edit_second == 0</span><span style="color:#d7ba7d">)</span> <span class="pl">{</span></div>
<div class="ln" style="left:71px;top:177.1px">65</div>
<div class="code" style="left:143px;top:177.1px">          <span class="mc">MessageBox</span><span class="pl">(</span></div>
<div class="ln" style="left:71px;top:208.7px">66</div>
<div class="ln" style="left:71px;top:240.4px">67</div>
<div class="ln" style="left:71px;top:272.0px">68</div>
<div class="ln" style="left:71px;top:303.6px">69</div>
<div class="code" style="left:143px;top:303.6px">      <span class="ty">CString</span> <span class="va">str</span><span class="pl">;</span></div>
<div class="ln" style="left:71px;top:335.3px">70</div>
<div class="code" style="left:143px;top:335.3px">      <span class="kw">int</span> <span class="va">n</span><span class="pl"> = 0;</span></div>
<div class="ln" style="left:71px;top:366.9px">71</div>
<div class="code" style="left:143px;top:366.9px">      <span class="pl">list_up.GetText(n, str);</span></div>
<div class="ln" style="left:71px;top:398.5px">72</div>
<div class="ln" style="left:71px;top:430.1px">73</div>
<div class="code" style="left:143px;top:430.1px">      <span class="kw">double</span> <span class="va">result</span><span class="pl"> = 0;</span></div>
<div class="ln" style="left:71px;top:461.7px">74</div>
<div class="code" style="left:143px;top:461.7px">      <span class="ck">if</span> <span style="color:#d7ba7d">(</span><span class="va">str</span><span class="pl"> == </span><span style="color:#d69d85">"+"</span><span style="color:#d7ba7d">)</span></div>
<div class="ln" style="left:71px;top:493.4px">75</div>
<div class="code" style="left:143px;top:493.4px">      <span class="ck">else</span> <span class="ck">if</span></div>
<div class="ln" style="left:71px;top:525.0px">76</div>
<div class="code" style="left:143px;top:525.0px">      <span class="ck">else</span> <span class="ck">if</span></div>
<div class="ln" style="left:71px;top:556.6px">77</div>
<div class="code" style="left:143px;top:556.6px">      <span class="ck">else</span> <span class="ck">if</span></div>
<div class="ln" style="left:71px;top:588.3px">78</div>
<div class="ln" style="left:71px;top:619.9px">79</div>
<div class="code" style="left:143px;top:619.9px">      <span class="cm">//</span></div>
<div class="ln" style="left:71px;top:651.5px">80</div>
<div class="ln" style="left:71px;top:683.1px">81</div>
<div class="code" style="left:143px;top:683.1px">      <span class="ty">CString</span> <span class="va">formula</span><span class="pl">;</span></div>
<div class="ln" style="left:71px;top:714.7px">82</div>
<div class="code" style="left:143px;top:714.7px">      <span class="va" style="text-decoration:underline wavy #57a64a 1.5px;text-underline-offset:4px">formula</span><span class="pl">.Format(</span></div>
<div class="ln" style="left:71px;top:746.4px">83</div>
<div class="code" style="left:143px;top:746.4px">      <span class="kw">this</span><span class="pl">-&gt;UpdateData(</span><span class="kw">false</span><span class="pl">);</span></div>
<div class="ln" style="left:71px;top:778.0px">84</div>
<div class="code" style="left:143px;top:778.0px">  <span class="pl">}</span></div>
<div class="ln" style="left:71px;top:809.6px">85</div>
<div class="a" style="left:167px;top:620px;width:1488px;height:31px;border:2px solid #464646"></div>
<div class="a" style="left:150px;top:26px;width:17px;height:17px;border:2px solid #a0a0a0;background:#1e1e1e"></div>
<div class="a" style="left:154px;top:33px;width:9px;height:2.500px;background:#f1f1f1"></div>
<div class="a" style="left:158px;top:43px;width:2px;height:765px;background:#a0a0a0"></div>
<div class="a" style="left:158px;top:806px;width:8px;height:2px;background:#a0a0a0"></div>
<div class="a" style="left:174px;top:86px;width:0;height:690px;border-left:2px dashed #7a7a7a"></div>
</div>
<div class="a" style="left:2017px;top:176px;width:30px;height:826px;background:#3e3e42"></div>
<svg style="left:2024px;top:186px" width="14" height="8"><path d="M0 8 H14 L7 0 Z" fill="#999"/></svg>
<svg style="left:2024px;top:985px" width="14" height="8"><path d="M0 0 H14 L7 8 Z" fill="#999"/></svg>
<div class="a" style="left:2019px;top:295px;width:6px;height:11px;background:#577430"></div>
<div class="a" style="left:2019px;top:371px;width:6px;height:68px;background:#577430"></div>
<div class="a" style="left:2019px;top:455px;width:6px;height:343px;background:#577430"></div>
<div class="a" style="left:2025px;top:611px;width:14px;height:180px;background:#686868"></div>
<div class="a" style="left:2019px;top:737px;width:6px;height:19px;background:#efef7c"></div>
<div class="a" style="left:2017px;top:747px;width:28px;height:3px;background:#e0e0e0"></div>
<div class="a" style="left:2037px;top:768px;width:7px;height:8px;background:#7fd77f"></div>
<div class="a" style="left:360px;top:1002px;width:1687px;height:28px;background:#2d2d30;border-left:2px solid #3f3f46;border-bottom:2px solid #3f3f46"></div>
<div class="a" style="left:362px;top:1003px;width:85px;height:25px;background:#333337"></div>
<div class="t" style="left:364px;top:1003px"><span class="e" style="font-size:1.003em">124 %</span></div>
<svg style="left:438px;top:1013px" width="10" height="6"><path d="M0 0 H10 L5 5.500 Z" fill="#dcdcdc"/></svg>
<svg style="left:490px;top:1006px" width="19" height="19" viewBox="0 0 19 19"><circle cx="9.500" cy="9.500" r="8.500" fill="#e51400" stroke="#fff" stroke-width="1.500"/><path d="M6 6 L13 13 M13 6 L6 13" stroke="#fff" stroke-width="2.200"/></svg>
<div class="t" style="left:515px;top:1003px"><span class="e" style="font-size:1.086em">0</span></div>
<svg style="left:560px;top:1005px" width="20" height="19" viewBox="0 0 20 19"><path d="M10 1 L19.500 18.500 H0.5 Z" fill="#ffcc00" stroke="#fff8d0" stroke-width="0.800"/><path d="M10 6.500 V13" stroke="#000" stroke-width="2.200"/><circle cx="10" cy="15.800" r="1.300"/></svg>
<div class="t" style="left:586px;top:1003px"><span class="e" style="font-size:1.086em">2</span></div>
<div class="t" style="left:1913px;top:1004px">制表符</div>
<div class="t" style="left:1990px;top:1004px"><span class="e" style="font-size:0.883em">CRLF</span></div>
<!-- ===== output panel ===== -->
<div class="a" style="left:360px;top:1040px;width:1688px;height:252px;background:#2d2d30;border:2px solid #3f3f46"></div>
<div class="t" style="left:367px;top:1046px;color:#d0d0d0">输出</div>
<div class="a grip" style="left:414px;top:1053px;width:1546px;height:8px"></div>
<svg style="left:1969px;top:1053px" width="12" height="7"><path d="M0 0 H12 L6 6.500 Z" fill="#f1f1f1"/></svg>
<svg style="left:1995px;top:1048px" width="12" height="17" viewBox="0 0 12 17"><path d="M3 1 H9 V8 M3 1 V8 M1 8.500 H11 M6 9 V16 M7.500 1 V8" fill="none" stroke="#f1f1f1" stroke-width="1.600"/></svg>
<svg style="left:2020px;top:1050px" width="15" height="13" viewBox="0 0 15 13"><path d="M1 0.5 L14 12.500 M14 0.5 L1 12.500" stroke="#f1f1f1" stroke-width="2.200"/></svg>
<div class="t" style="left:371px;top:1083px">显示输出来源<span class="e" style="font-size:0.923em">(S):</span></div>
<div class="cb" style="left:515px;top:1080px;width:400px;height:29px"></div>
<div class="t" style="left:521px;top:1083px">调试</div>
<div class="a" style="left:362px;top:1113px;width:1655px;height:155px;background:#1e1e1e;overflow:hidden">
<div class="a" style="left:18px;top:-4.3px;white-space:nowrap;line-height:24px;height:24px;font-family:'Liberation Serif','Noto Serif CJK SC',serif;font-size:18px;color:#dcdcdc">线程<span class="ol">&nbsp;0x74e0&nbsp;</span>已退出，返回值为<span class="ol">&nbsp;0&nbsp;(0x0)</span>。</div>
<div class="a" style="left:18px;top:18.3px;white-space:nowrap;line-height:24px;height:24px;font-family:'Liberation Serif','Noto Serif CJK SC',serif;font-size:18px;color:#dcdcdc">线程<span class="ol">&nbsp;0x1350&nbsp;</span>已退出，返回值为<span class="ol">&nbsp;0&nbsp;(0x0)</span>。</div>
<div class="a" style="left:18px;top:40.9px;white-space:nowrap;line-height:24px;height:24px;font-family:'Liberation Serif','Noto Serif CJK SC',serif;font-size:18px;color:#dcdcdc">线程<span class="ol">&nbsp;0x8e8c&nbsp;</span>已退出，返回值为<span class="ol">&nbsp;0&nbsp;(0x0)</span>。</div>
<div class="a" style="left:18px;top:63.5px;white-space:nowrap;line-height:24px;height:24px;font-family:'Liberation Serif','Noto Serif CJK SC',serif;font-size:18px;color:#dcdcdc">线程<span class="ol">&nbsp;0x2424&nbsp;</span>已退出，返回值为<span class="ol">&nbsp;0&nbsp;(0x0)</span>。</div>
<div class="a" style="left:18px;top:86.1px;white-space:nowrap;line-height:24px;height:24px;font-family:'Liberation Serif','Noto Serif CJK SC',serif;font-size:18px;color:#dcdcdc">线程<span class="ol">&nbsp;0x79ec&nbsp;</span>已退出，返回值为<span class="ol">&nbsp;0&nbsp;(0x0)</span>。</div>
<div class="a" style="left:18px;top:108.7px;white-space:nowrap;line-height:24px;height:24px;font-family:'Liberation Serif','Noto Serif CJK SC',serif;font-size:18px;color:#dcdcdc">程序<span class="cq" style="text-align:right">“</span><span class="ol">[15732]&nbsp;MFC9211100X0624.exe</span><span class="cq" style="text-align:left">”</span>已退出，返回值为<span class="ol">&nbsp;0&nbsp;(0x0)</span>。</div>
</div>
<div class="a" style="left:2017px;top:1113px;width:29px;height:155px;background:#3e3e42"></div>
<svg style="left:2024px;top:1123px" width="14" height="8"><path d="M0 8 H14 L7 0 Z" fill="#999"/></svg>
<svg style="left:2024px;top:1251px" width="14" height="8"><path d="M0 0 H14 L7 8 Z" fill="#999"/></svg>
<div class="a" style="left:2023px;top:1222px;width:17px;height:8px;background:#686868"></div>
<div class="a" style="left:2016px;top:1231px;width:29px;height:3px;background:#e0e0e0"></div>
<div class="a" style="left:362px;top:1268px;width:1684px;height:23px;background:#3e3e42"></div>
<svg style="left:370px;top:1273px" width="8" height="14"><path d="M8 0 V14 L0 7 Z" fill="#999"/></svg>
<div class="a" style="left:387px;top:1274px;width:1461px;height:11px;background:#686868"></div>
<svg style="left:1999px;top:1273px" width="8" height="14"><path d="M0 0 V14 L8 7 Z" fill="#999"/></svg>
<div class="t" style="left:369px;top:1295px">错误列表</div>
<div class="t" style="left:460px;top:1295px">命令窗口</div>
<div class="a" style="left:542px;top:1290px;width:54px;height:33px;background:#252526;border:2px solid #3f3f46;border-top:none"></div>
<div class="t" style="left:550px;top:1295px;color:#0097fb">输出</div>
<div class="t" style="left:606px;top:1295px">查找符号结果</div>
<!-- ===== properties panel ===== -->
<div class="a" style="left:2056px;top:110px;width:457px;height:1213px;background:#252526;border:2px solid #3f3f46"></div>
<div class="a" style="left:2058px;top:112px;width:453px;height:104px;background:#2d2d30"></div>
<div class="t" style="left:2064px;top:117px;color:#d0d0d0">属性</div>
<div class="a grip" style="left:2112px;top:124px;width:310px;height:8px"></div>
<svg style="left:2435px;top:125px" width="12" height="7"><path d="M0 0 H12 L6 6.500 Z" fill="#f1f1f1"/></svg>
<svg style="left:2461px;top:120px" width="12" height="17" viewBox="0 0 12 17"><path d="M3 1 H9 V8 M3 1 V8 M1 8.500 H11 M6 9 V16 M7.500 1 V8" fill="none" stroke="#f1f1f1" stroke-width="1.600"/></svg>
<svg style="left:2486px;top:122px" width="15" height="13" viewBox="0 0 15 13"><path d="M1 0.5 L14 12.500 M14 0.5 L1 12.500" stroke="#f1f1f1" stroke-width="2.200"/></svg>
<div class="a" style="left:2058px;top:146px;width:453px;height:29px;background:#333337"></div>
<svg style="left:2492px;top:157px" width="9" height="6"><path d="M0 0 H9 L4.500 5.500 Z" fill="#f1f1f1"/></svg>
<svg style="left:2066px;top:184px" width="24" height="23" viewBox="0 0 24 23"><g fill="none" stroke="#d8d8d8" stroke-width="1.600"><rect x="1" y="1" width="7" height="7"/><rect x="1" y="14" width="7" height="7"/></g><path d="M2.500 4.500 H6.500 M4.500 2.500 V6.500 M2.500 17.500 H6.500 M4.500 15.500 V19.500 M11 2 H22 M11 6 H22 M11 10 H22 M11 15 H22 M11 19 H20 M22 19 H23.500" stroke="#d8d8d8" stroke-width="1.800"/></svg>
<div class="a" style="left:2095px;top:179px;width:34px;height:33px;background:#333337;border:1px solid #3399ff"></div>
<svg style="left:2100px;top:184px" width="25" height="24" viewBox="0 0 25 24"><rect x="1" y="1" width="10" height="10" fill="#9a9a9a"/><rect x="1" y="13" width="10" height="9" fill="#9a9a9a"/><text x="2.500" y="9.500" font-family="Liberation Sans,sans-serif" font-size="9" font-weight="bold" fill="#2d2d30">A</text><text x="2.500" y="21" font-family="Liberation Sans,sans-serif" font-size="9" font-weight="bold" fill="#2d2d30">Z</text><path d="M17.500 5 V15" stroke="#3fa9f5" stroke-width="4"/><path d="M12 13 H23 L17.500 20 Z" fill="#3fa9f5"/></svg>
<div class="a" style="left:2132px;top:181px;width:1px;height:30px;background:#222224"></div>
<svg style="left:2139px;top:182px" width="26" height="26" viewBox="0 0 26 26"><path d="M2.500 23.500 L13 13" stroke="#9a9a9a" stroke-width="5" stroke-linecap="round"/><circle cx="17.500" cy="8.500" r="7" fill="#9a9a9a"/><path d="M18 2 L24 8 L20 9 L17 6 Z" fill="#2d2d30"/></svg>
<div class="a" style="left:2058px;top:1228px;width:453px;height:1px;background:#333337"></div>
<div class="a" style="left:2551px;top:110px;width:9px;height:72px;background:#3f3f46"></div>
<div class="a" style="left:2551px;top:200px;width:9px;height:54px;background:#3f3f46"></div>
<div class="t" style="left:2533px;top:111px;transform-origin:0 0;transform:translate(12px,0) rotate(90deg);font-size:17.500px;color:#d0d0d0">诊断工具</div>
<div class="t" style="left:2533px;top:201px;transform-origin:0 0;transform:translate(12px,0) rotate(90deg);font-size:17.500px;color:#d0d0d0">工具箱</div>
<!-- ===== status bar ===== -->
<div class="a" style="left:0;top:1331px;width:2560px;height:37px;background:#007acc"></div>
<div class="a" style="left:0;top:1368px;width:2560px;height:11px;background:linear-gradient(90deg,#13224a 0%,#1a2548 25%,#2e2430 45%,#2e2c2a 60%,#1d302c 75%,#0f3836 100%)"></div>
<svg style="left:5px;top:1340px" width="26" height="19" viewBox="0 0 26 19"><path d="M5 1.500 H24.500 L20.500 17.500 H1.500 Z" fill="none" stroke="#fff" stroke-width="1.800"/></svg>
<div class="t" style="left:41px;top:1338px;color:#fff">就绪</div>
<svg style="left:2277px;top:1342px" width="14" height="17" viewBox="0 0 14 17"><path d="M7 16.500 V2.500 M1 8 L7 1.500 L13 8" fill="none" stroke="#fff" stroke-width="2.400"/></svg>
<div class="t" style="left:2306px;top:1338px;color:#fff">添加到源代码管理</div>
<svg style="left:2459px;top:1346px" width="13" height="7"><path d="M0 7 H13 L6.500 0 Z" fill="#fff"/></svg>
<svg style="left:2502px;top:1339px" width="22" height="22" viewBox="0 0 22 22"><path d="M3 16 C6 13 4 5 11 4 C18 5 16 13 19 16 Z" fill="#dce6f0"/><circle cx="11" cy="18.500" r="2.500" fill="#dce6f0"/></svg>
<div class="a" style="left:2517px;top:1349px;width:16px;height:16px;border-radius:8px;background:#e51400"></div>
<div class="t" style="left:2517px;top:1345px;width:16px;text-align:center;font-size:13px;color:#fff"><span class="e" style="font-size:1.086em">1</span></div>
<!-- ===== class wizard dialog ===== -->
<div class="a" style="left:644px;top:131px;width:1272px;height:1095px;background:#f0f0f0;border-radius:12px;box-shadow:0 0 0 1px rgba(70,70,70,.6),0 6px 22px rgba(0,0,0,.35);overflow:hidden;color:#000">
<div class="a" style="left:0;top:0;width:1272px;height:177px;background:#fff"></div>
<div class="wl" style="left:11px;top:11px;color:#999">类向导</div>
<div class="wl" style="left:1157px;top:10px;color:#999;font-size:19.500px;width:20px;text-align:center"><span class="e" style="font-size:0.886em">?</span></div>
<svg style="left:1230px;top:14px" width="16" height="16" viewBox="0 0 16 16"><path d="M0.5 0.5 L15.500 15.500 M15.500 0.5 L0.5 15.500" stroke="#999" stroke-width="1.500"/></svg>
<svg style="left:0px;top:44px" width="100" height="100" viewBox="0 0 100 100"><g fill="#58595b"><path d="M37.300 9.800 L50 21.400 L22.500 47.900 L9.800 35.500 Z"/><path d="M74.700 29.700 L84.100 37.300 L67.400 54 L59.100 45.500 Z"/><path d="M73.200 60.900 L84.100 70.300 L68.900 85.200 L58 75.400 Z"/><rect x="31.900" y="34.100" width="39.100" height="3.600"/><rect x="43.100" y="36" width="3.700" height="34"/><rect x="43.100" y="66.200" width="25" height="3.800"/></g></svg>
<div class="wl b" style="left:192px;top:73px;font-family:'Liberation Serif','Noto Serif CJK SC',serif;font-size:19.700px">欢迎使用类向导</div>
<div class="wl" style="left:27px;top:187px">项目<span class="e" style="font-size:0.943em">(P):</span></div>
<div class="a" style="left:23px;top:219px;width:600px;height:31px;background:#fbfbfb;border:1px solid #e2e2e2;border-radius:3px"></div>
<div class="wl" style="left:28px;top:223px"><span class="e" style="font-size:1.095em">MFC9211100X0624</span></div>
<div class="wl" style="left:32px;top:274px">基类<span class="e" style="font-size:0.858em">:</span></div>
<div class="a" style="left:151px;top:270px;width:300px;height:29px;background:#f8f8f8;border:1px solid #e2e2e2;border-bottom-color:#8f8f8f;border-radius:3px"></div>
<div class="wl" style="left:154px;top:272px"><span class="e" style="font-size:1.047em">CDialogEx</span></div>
<div class="wl" style="left:32px;top:320px">资源<span class="e" style="font-size:0.858em">:</span></div>
<div class="a" style="left:151px;top:315px;width:300px;height:29px;background:#f8f8f8;border:1px solid #e2e2e2;border-bottom-color:#8f8f8f;border-radius:3px"></div>
<div class="wl" style="left:154px;top:318px"><span class="e" style="font-size:1.029em">IDD_DIALOG_calculate</span></div>
<div class="a" style="left:20px;top:357px;width:66px;height:30px;background:#f0f0f0;border:1px solid #dcdcdc;border-bottom:none"></div>
<div class="wl" style="left:26px;top:360px">命令</div>
<div class="a" style="left:85px;top:357px;width:67px;height:30px;background:#f0f0f0;border:1px solid #dcdcdc;border-bottom:none"></div>
<div class="wl" style="left:92px;top:360px">消息</div>
<div class="a" style="left:151px;top:357px;width:67px;height:30px;background:#f0f0f0;border:1px solid #dcdcdc;border-bottom:none"></div>
<div class="wl" style="left:157px;top:360px">虚函数</div>
<div class="a" style="left:19px;top:386px;width:1233px;height:631px;background:#f9f9f9;border:1px solid #dcdcdc"></div>
<div class="a" style="left:217px;top:354px;width:90px;height:33px;background:#f9f9f9;border:1px solid #dcdcdc;border-bottom:none"></div>
<div class="wl" style="left:224px;top:358px">成员变量</div>
<div class="a" style="left:31px;top:397px;width:600px;height:38px;background:#fff;border:1px solid #6e6e6e"></div>
<div class="wl" style="left:36px;top:403px;color:#8a8a8a">搜索变量</div>
<div class="wl" style="left:31px;top:454px">成员变量<span class="e" style="font-size:0.984em">(V):</span></div>
<div class="a" style="left:31px;top:482px;width:991px;height:486px;background:#fff;border:1px solid #828790"></div>
<div class="wl" style="left:39px;top:488px">控件 <span class="e" style="font-size:1.064em">ID</span></div>
<div class="a" style="left:61px;top:655px;width:958px;height:27px;background:#f0f0f0"></div>
<svg style="left:39px;top:517px" width="22" height="22" viewBox="0 0 22 22"><rect x="5" y="4" width="15" height="16" fill="#fff" stroke="#3a3a3a" stroke-width="2"/><rect x="0" y="0" width="9" height="9" fill="#fff"/><path d="M4.500 0.5 V8.500 M0.5 4.500 H8.500" stroke="#2e8b2e" stroke-width="2.400"/></svg>
<div class="wl li" style="left:63px;top:516px"><span class="e" style="font-size:1.005em">IDC_BUTTON_equal</span></div>
<svg style="left:39px;top:548px" width="17" height="15" viewBox="0 0 17 15"><path d="M8 0.5 L16.500 4 V9 L8.500 14.500 L0.5 10 V5 Z" fill="#1e6fb0"/><path d="M8 2.500 L13 4.500 L8.500 7.500 L4 5.500 Z" fill="#e8f4ff"/></svg>
<div class="wl li" style="left:63px;top:544px"><span class="e" style="font-size:0.991em">IDC_EDIT_first</span></div>
<svg style="left:39px;top:576px" width="17" height="15" viewBox="0 0 17 15"><path d="M8 0.5 L16.500 4 V9 L8.500 14.500 L0.5 10 V5 Z" fill="#1e6fb0"/><path d="M8 2.500 L13 4.500 L8.500 7.500 L4 5.500 Z" fill="#e8f4ff"/></svg>
<div class="wl li" style="left:63px;top:572px"><span class="e" style="font-size:0.983em">IDC_EDIT_second</span></div>
<svg style="left:39px;top:604px" width="17" height="15" viewBox="0 0 17 15"><path d="M8 0.5 L16.500 4 V9 L8.500 14.500 L0.5 10 V5 Z" fill="#1e6fb0"/><path d="M8 2.500 L13 4.500 L8.500 7.500 L4 5.500 Z" fill="#e8f4ff"/></svg>
<div class="wl li" style="left:63px;top:600px"><span class="e" style="font-size:0.979em">IDC_LIST_DOWN</span></div>
<svg style="left:39px;top:632px" width="17" height="15" viewBox="0 0 17 15"><path d="M8 0.5 L16.500 4 V9 L8.500 14.500 L0.5 10 V5 Z" fill="#1e6fb0"/><path d="M8 2.500 L13 4.500 L8.500 7.500 L4 5.500 Z" fill="#e8f4ff"/></svg>
<div class="wl li" style="left:63px;top:628px"><span class="e" style="font-size:0.930em">IDC_LIST_UP</span></div>
<svg style="left:39px;top:657px" width="22" height="22" viewBox="0 0 22 22"><rect x="5" y="4" width="15" height="16" fill="#bcd8f0" stroke="#3a3a3a" stroke-width="2"/><rect x="0" y="0" width="9" height="9" fill="#fff"/><path d="M4.500 0.5 V8.500 M0.5 4.500 H8.500" stroke="#2e8b2e" stroke-width="2.400"/></svg>
<div class="wl li" style="left:63px;top:656px"><span class="e" style="font-size:0.995em">IDC_STATIC_result</span></div>
<div class="wl" style="left:36px;top:979.5px">说明<span class="e" style="font-size:0.858em">:</span></div>
<div class="wbtn" style="left:820px;top:1034px;width:135px;height:41px">确定</div>
<div class="wbtn" style="left:967px;top:1034px;width:135px;height:41px">取消</div>
<div class="wbtn" style="left:1114px;top:1034px;width:135px;height:41px">应用</div>
</div>
<!-- ===== add control variable dialog ===== -->
<div class="a" style="left:896px;top:226px;width:1093px;height:788px;background:#252526;border:2px solid #3f3f46"></div>
<div class="a" style="left:898px;top:922px;width:1089px;height:90px;background:#2d2d30"></div>
<svg style="left:1956px;top:246px" width="14" height="12" viewBox="0 0 14 12"><path d="M1 0.5 L13 11.500 M13 0.5 L1 11.500" stroke="#d0d0d0" stroke-width="2.600"/></svg>
<div class="dl" style="left:941px;top:304px;font-size:36px;line-height:48px;height:48px;font-weight:300;font-family:'Liberation Sans','Noto Sans CJK SC',sans-serif">添加控制变量</div>
<div class="dl" style="left:942px;top:349px;font-size:22px;line-height:28px;height:28px">常规设置</div>
<div class="a" style="left:937px;top:423px;width:300px;height:54px;background:#007acc"></div>
<div class="dl" style="left:955px;top:439px;color:#fff">控件</div>
<div class="dl" style="left:955px;top:493px">其他</div>
<div class="dl" style="left:1276px;top:431px">控件 <span class="e" style="font-size:1.047em">ID(</span><u><span class="e" style="font-size:1.053em">I</span></u><span class="e" style="font-size:0.995em">)</span></div>
<div class="dl" style="left:1612px;top:431px">控件类型<span class="e" style="font-size:0.995em">(</span><u><span class="e" style="font-size:0.911em">Y</span></u><span class="e" style="font-size:0.995em">)</span></div>
<div class="dl" style="left:1276px;top:527px">类别<span class="e" style="font-size:0.995em">(</span><u><span class="e" style="font-size:0.943em">T</span></u><span class="e" style="font-size:0.995em">)</span></div>
<div class="dl" style="left:1612px;top:527px">名称<span class="e" style="font-size:0.995em">(</span><u><span class="e" style="font-size:1.139em">N</span></u><span class="e" style="font-size:0.995em">)</span></div>
<div class="dl" style="left:1276px;top:621px">访问<span class="e" style="font-size:0.995em">(</span><u><span class="e" style="font-size:1.064em">A</span></u><span class="e" style="font-size:0.995em">)</span></div>
<div class="dl" style="left:1612px;top:621px">变量类型<span class="e" style="font-size:0.995em">(</span><u><span class="e" style="font-size:1.024em">V</span></u><span class="e" style="font-size:0.995em">)</span></div>
<div class="dl" style="left:1276px;top:716px">注释<span class="e" style="font-size:0.995em">(</span><u><span class="e" style="font-size:1.185em">M</span></u><span class="e" style="font-size:0.995em">)</span></div>
<div class="dbox" style="left:1276px;top:464px;width:300px;height:34px;"></div>
<div class="dl" style="left:1281px;top:469px;color:#f1f1f1"><span class="e" style="font-size:0.995em">IDC_STATIC_result</span></div>
<svg style="left:1559px;top:479px" width="10" height="6"><path d="M0 0 H10 L5 5.500 Z" fill="#999"/></svg>
<div class="dbox" style="left:1612px;top:464px;width:300px;height:34px;"></div>
<div class="dl" style="left:1617px;top:469px;color:#656565"><span class="e" style="font-size:0.940em">LTEXT</span></div>
<div class="dbox" style="left:1276px;top:559px;width:300px;height:34px;"></div>
<div class="dl" style="left:1281px;top:564px;color:#f1f1f1">值</div>
<svg style="left:1559px;top:574px" width="10" height="6"><path d="M0 0 H10 L5 5.500 Z" fill="#999"/></svg>
<div class="dbox" style="left:1612px;top:559px;width:300px;height:34px;"></div>
<div class="dl" style="left:1617px;top:564px;color:#f1f1f1"><span class="e" style="font-size:1.067em">static_result</span></div>
<div class="dbox" style="left:1276px;top:654px;width:300px;height:34px;"></div>
<div class="dl" style="left:1281px;top:659px;color:#f1f1f1"><span class="e" style="font-size:1.165em">public</span></div>
<svg style="left:1559px;top:669px" width="10" height="6"><path d="M0 0 H10 L5 5.500 Z" fill="#999"/></svg>
<div class="dbox" style="left:1612px;top:654px;width:300px;height:34px;background:#3f3f46;border-color:#007acc;"></div>
<div class="dl" style="left:1617px;top:659px;color:#f1f1f1"><span class="e" style="font-size:1.143em">double</span></div>
<div class="dbox" style="left:1276px;top:749px;width:636px;height:34px;"></div>
<div class="dbtn" style="left:1482px;top:948px;width:112px;height:34px;background:#2d2d30;border-color:#434346;color:#656565;">上一步</div>
<div class="dbtn" style="left:1603px;top:948px;width:112px;height:34px;">下一步</div>
<div class="dbtn" style="left:1724px;top:948px;width:112px;height:34px;border-color:#007acc;">完成</div>
<div class="dbtn" style="left:1845px;top:948px;width:112px;height:34px;">取消</div>
<!-- ===== red annotations ===== -->
<div class="t red" style="left:1438px;top:369px;font-size:24px;line-height:32px;height:32px">把控件和对话框的成员变量联系起来</div>
<div class="t red" style="left:958px;top:635px;font-size:24px;line-height:32px;height:32px">静态文本框我们用值类型</div>
<div class="t red" style="left:958px;top:667px;font-size:24px;line-height:32px;height:32px">因为是直接赋值给它，让</div>
<div class="t red" style="left:958px;top:699px;font-size:24px;line-height:32px;height:32px">它显示</div>
<div class="a" style="left:1267px;top:454px;width:213px;height:54px;border:3px solid #f9393c"></div>
<div class="a" style="left:1611px;top:556px;width:154px;height:49px;border:3px solid #f9393c"></div>
<svg style="left:0;top:0" width="2560" height="1379" viewBox="0 0 2560 1379"><g fill="#f9393c" stroke="none"><path d="M849.800 801.300 L925 723 L922 719.300 L939 714.200 L932.400 730.600 L929 728.500 Z"/><path d="M1212.700 625.400 L1255.200 587 L1252.300 584.100 L1268.900 578.300 L1261.700 594.300 L1258.900 592 Z"/><path d="M1471 494.200 L1603 567.500 L1606 564 L1616.600 577.600 L1599 576.600 L1600 572.500 Z"/></g></svg>
</body></html>
